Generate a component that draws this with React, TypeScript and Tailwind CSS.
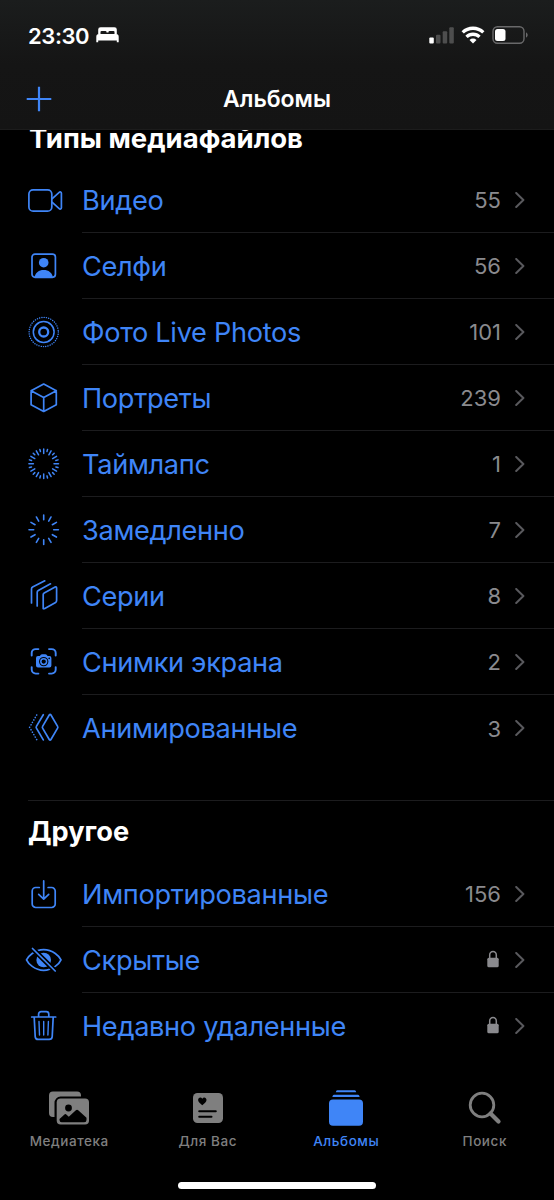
import type { ReactNode } from "react";

type IconProps = {
  children: ReactNode;
};

// All row icons share a 40px box and a thin outline
function RowIcon({ children }: IconProps) {
  return (
    <svg
      viewBox="0 0 40 40"
      className="h-10 w-10 shrink-0"
      fill="none"
      stroke="currentColor"
      strokeWidth="1.7"
      strokeLinecap="round"
      strokeLinejoin="round"
    >
      {children}
    </svg>
  );
}

function ticks(count: number, inner: number, outer: number, offset = 0) {
  return Array.from({ length: count }, (_, i) => {
    const a = ((i + offset) * 2 * Math.PI) / count;
    const x = Math.sin(a);
    const y = Math.cos(a);
    return `M${19.7 + x * inner} ${19.7 - y * inner}L${19.7 + x * outer} ${19.7 - y * outer}`;
  }).join("");
}

const icons = {
  video: (
    <RowIcon>
      <rect x="4.9" y="9.9" width="22.9" height="21.2" rx="4.2" />
      <path d="M28.3 18.6l6.9-6.2c.9-.8 2.2-.4 2.2.9v14.4c0 1.3-1.3 1.7-2.2.9l-6.9-6.2" />
    </RowIcon>
  ),
  selfie: (
    <RowIcon>
      <rect x="8" y="8.1" width="23.4" height="23.2" rx="3" />
      <circle cx="19.7" cy="16.7" r="4.8" fill="currentColor" stroke="none" />
      <path d="M10.5 31.3c.7-4.6 4.4-7.3 9.2-7.3s8.5 2.7 9.2 7.300z" fill="currentColor" stroke="none" />
    </RowIcon>
  ),
  live: (
    <RowIcon>
      <circle cx="19.7" cy="20" r="4.5" strokeWidth="2.3" />
      <circle cx="19.7" cy="20" r="10.4" strokeWidth="1.5" />
      <circle cx="19.7" cy="20" r="14.6" strokeWidth="1.4" strokeDasharray="0.1 2.193" />
    </RowIcon>
  ),
  cube: (
    <RowIcon>
      <path d="M19.7 6L32.3 12.700v14L19.7 33.400L7.100 26.700V12.700zM7.100 12.700l12.600 6.900l12.600-6.900M19.700 19.600v13.800" />
    </RowIcon>
  ),
  timelapse: (
    <RowIcon>
      <path d={ticks(12, 10.3, 14.8)} strokeWidth="1.5" />
      <path d={ticks(12, 12.6, 14.8, 0.5)} strokeWidth="1.5" />
    </RowIcon>
  ),
  slomo: (
    <RowIcon>
      <path d={ticks(12, 10, 14.7)} strokeWidth="1.6" />
    </RowIcon>
  ),
  burst: (
    <RowIcon>
      <path d="M19.2 32.700V18.600c0-.8.3-1.300 1-1.700l10.900-5.900c.9-.5 1.500 0 1.500.9v12.700c0 .9-.3 1.400-1 1.800l-10.800 6c-.9.5-1.600.4-1.600.3z" />
      <path d="M13.200 30V16.200c0-.9.4-1.400 1.100-1.800l12.200-6.600M7.500 27V12.900c0-.9.4-1.400 1.100-1.800l12.200-6.300" />
    </RowIcon>
  ),
  screenshot: (
    <RowIcon>
      <g transform="translate(0 -0.4)">
        <path
          d="M7.700 14v-2.500a4 4 0 0 1 4-4h2.700M25 7.500h2.700a4 4 0 0 1 4 4V14M31.700 25.500V28a4 4 0 0 1-4 4H25M14.400 32h-2.700a4 4 0 0 1-4-4v-2.500"
          strokeWidth="1.9"
        />
        <path
          fillRule="evenodd"
          stroke="none"
          fill="currentColor"
          d="M14 14.500h1.800l1-1.300c.3-.4.7-.6 1.200-.6h3.400c.5 0 .9.200 1.200.6l1 1.300h1.800a2 2 0 0 1 2 2v7.400a2 2 0 0 1-2 2H14a2 2 0 0 1-2-2v-7.400a2 2 0 0 1 2-2zM19.700 15.300a4.700 4.700 0 1 0 0 9.400a4.700 4.700 0 0 0 0-9.400zM25.200 16a.8.8 0 1 0 0 1.600a.8.8 0 0 0 0-1.600z"
        />
        <circle cx="19.7" cy="20" r="2.900" strokeWidth="1.500" />
      </g>
    </RowIcon>
  ),
  animated: (
    <RowIcon>
      <g transform="translate(0 -0.4)">
        <path d="M25.400 7.200c.4-.6 1-.6 1.400 0l6.800 11.600c.4.6.4 1.100 0 1.700l-6.800 11.700c-.4.6-1 .6-1.400 0l-6.800-11.700c-.4-.6-.4-1.100 0-1.700z" />
        <path d="M19.300 7.100l-6.900 11.700c-.4.6-.4 1.100 0 1.700l6.900 11.800" />
        <path d="M12.700 7.400L5.600 19.700L12.700 32" strokeWidth="1.600" strokeDasharray="0.100 2.730" />
      </g>
    </RowIcon>
  ),
  imported: (
    <RowIcon>
      <path d="M15.300 13.500h-3.600a3.500 3.500 0 0 0-3.500 3.500v13a3.500 3.500 0 0 0 3.500 3.500h16a3.500 3.500 0 0 0 3.500-3.500V17a3.500 3.500 0 0 0-3.500-3.500h-3.600" />
      <path d="M19.700 6.900v18M14.700 20.300l5 4.800l5-4.800" />
    </RowIcon>
  ),
  hidden: (
    <RowIcon>
      <path d="M2.500 19.900C4 16.500 10.500 9.700 19.700 9.700s15.900 6.800 17.300 10.200c-1.400 3.400-8.100 10.500-17.300 10.500S4 23.300 2.500 19.900z" />
      <circle cx="19.700" cy="20" r="7.300" fill="currentColor" stroke="none" />
      <path d="M8.200 8.200l23.300 23" stroke="black" strokeWidth="5" strokeLinecap="butt" />
      <path d="M8.500 8.500l22.700 22.500" />
    </RowIcon>
  ),
  trash: (
    <RowIcon>
      <path d="M7.700 11h24M14.600 10.600V8.200a2.500 2.500 0 0 1 2.500-2.500h5.200a2.500 2.500 0 0 1 2.500 2.500v2.400M10.200 11.200l1 19.400a3 3 0 0 0 3 2.800h11a3 3 0 0 0 3-2.800l1-19.400" />
      <path d="M15 15.500l.5 13.500M19.700 15.500V29M24.400 15.500L23.900 29" strokeWidth="1.400" />
    </RowIcon>
  ),
};

type Album = {
  icon: ReactNode;
  name: string;
  count?: number;
};

const mediaTypes: Album[] = [
  { icon: icons.video, name: "Видео", count: 55 },
  { icon: icons.selfie, name: "Селфи", count: 56 },
  { icon: icons.live, name: "Фото Live Photos", count: 101 },
  { icon: icons.cube, name: "Портреты", count: 239 },
  { icon: icons.timelapse, name: "Таймлапс", count: 1 },
  { icon: icons.slomo, name: "Замедленно", count: 7 },
  { icon: icons.burst, name: "Серии", count: 8 },
  { icon: icons.screenshot, name: "Снимки экрана", count: 2 },
  { icon: icons.animated, name: "Анимированные", count: 3 },
];

const other: Album[] = [
  { icon: icons.imported, name: "Импортированные", count: 156 },
  { icon: icons.hidden, name: "Скрытые" },
  { icon: icons.trash, name: "Недавно удаленные" },
];

function Lock() {
  return (
    <svg viewBox="0 0 12 18" className="mr-0.5 -mt-1 h-[18px] w-3" fill="none">
      <path d="M2.700 9V4.900a3.300 3.500 0 0 1 6.600 0V9" stroke="currentColor" strokeWidth="1.500" />
      <rect x="0.300" y="7.700" width="11.400" height="9.600" rx="1.500" fill="currentColor" />
    </svg>
  );
}

function AlbumRow({ album, last }: { album: Album; last: boolean }) {
  return (
    <div className="flex h-[66px] items-center pl-6 text-[#3f85f7]">
      {album.icon}
      <div
        className={`ml-[18px] flex h-full flex-1 items-center pr-[29px] ${last ? "" : "border-b border-[#1c1c1e]"}`}
      >
        <span className="flex-1 pt-[3px] text-[27.2px] tracking-[-0.33px]">{album.name}</span>
        <span className="pt-0.5 text-[22px] text-[#8a8a8e]">{album.count ?? <Lock />}</span>
        <svg viewBox="0 0 10 16" className="ml-3.5 h-4 w-2.5 text-[#59595d]" fill="none">
          <path
            d="M1.200 1l7.200 7l-7.200 7"
            stroke="currentColor"
            strokeWidth="2"
            strokeLinecap="round"
            strokeLinejoin="round"
          />
        </svg>
      </div>
    </div>
  );
}

function AlbumList({ albums }: { albums: Album[] }) {
  return (
    <div>
      {albums.map((album, i) => (
        <AlbumRow key={album.name} album={album} last={i === albums.length - 1} />
      ))}
    </div>
  );
}

function StatusBar() {
  return (
    <div className="flex h-[70px] items-center pl-7 pr-[26px]">
      <span className="pt-0.5 text-[22px] font-semibold tracking-[-0.4px]">23:30</span>
      <svg viewBox="0 0 23 16" className="ml-[7px] h-4 w-[23px]" fill="currentColor">
        <path
          fillRule="evenodd"
          d="M2.200 7.200V2.600A2.400 2.400 0 0 1 4.600.2h13.800a2.400 2.400 0 0 1 2.400 2.400v4.600h-2.300V5a1 1 0 0 0-1-1h-4a1 1 0 0 0-1 1v.6h-2V5a1 1 0 0 0-1-1h-4a1 1 0 0 0-1 1v2.200z"
        />
        <path d="M3 7h17a2.700 2.700 0 0 1 2.700 2.700v5.600h-1.900v-1.700H2.200v1.700H.3V9.700A2.700 2.700 0 0 1 3 7z" />
      </svg>
      <div className="ml-auto flex items-center">
        <svg viewBox="0 0 26 17" className="h-[17px] w-[26px]" fill="currentColor">
          <rect x="0.300" y="10.500" width="4.500" height="6" rx="1" />
          <g opacity="0.230">
            <rect x="7" y="7.800" width="4.500" height="8.700" rx="1" />
            <rect x="13.700" y="4.300" width="4.500" height="12.200" rx="1" />
            <rect x="20.300" y="0.300" width="4.500" height="16.200" rx="1" />
          </g>
        </svg>
        <svg viewBox="0 0 24 18" className="ml-1.5 h-[18px] w-6" fill="none" stroke="currentColor" strokeWidth="3.300">
          <path d="M1.700 6.400a14.800 14.800 0 0 1 20.600 0M5.500 10.900a9.300 9.300 0 0 1 13 0" />
          <path d="M12 17.500L8.500 14a5 5 0 0 1 7 0z" fill="currentColor" stroke="none" />
        </svg>
        <svg viewBox="0 0 36 18" className="ml-[7px] h-[18px] w-9" fill="none">
          <rect x="1" y="0.800" width="31" height="16.400" rx="4.500" stroke="#69696a" strokeWidth="1.400" />
          <rect x="3" y="3" width="10.500" height="12" rx="2.500" fill="white" />
          <path d="M34 6.500c1 .3 1.700 1.300 1.700 2.500s-.7 2.200-1.700 2.500z" fill="#69696a" />
        </svg>
      </div>
    </div>
  );
}

function Header() {
  return (
    <header className="relative z-10 h-[130px] shrink-0 border-b border-[#1c1c1c] bg-linear-to-b from-[#1b1d1d] via-[#151515] to-[#141414]">
      <StatusBar />
      <div className="grid grid-cols-3 items-center px-[26px] pt-3">
        <svg viewBox="0 0 26 26" className="h-[26px] w-[26px] text-[#3f85f7]" stroke="currentColor" strokeWidth="2.200">
          <path d="M13 0.700v24.600M0.700 13h24.600" />
        </svg>
        <h1 className="pt-px text-center text-[23px] leading-8 font-semibold">Альбомы</h1>
      </div>
    </header>
  );
}

const tabs = [
  {
    label: "Медиатека",
    icon: (
      <>
        <path d="M5 0.500h24a4 4 0 0 1 4 4v1H12.500A6.500 6.500 0 0 0 6.500 12v14H5a4 4 0 0 1-4-4V4.500a4 4 0 0 1 4-4z" />
        <rect x="8.700" y="7.500" width="32.300" height="26" rx="4" />
        <circle cx="20.500" cy="17" r="3.400" fill="black" />
        <path
          d="M11.500 28l4.700-4.300c.8-.8 1.600-.8 2.400 0l2.200 2l6.800-6.200c1-.9 1.900-.9 2.900 0l8 7.300v2.100a2.300 2.300 0 0 1-2.300 2.300H13.700a2.300 2.300 0 0 1-2.200-2.300z"
          fill="black"
        />
      </>
    ),
  },
  {
    label: "Для Вас",
    icon: (
      <>
        <rect x="6" y="2" width="30" height="30" rx="4.500" />
        <path
          d="M15.300 14.300c-2.500-1.900-4.200-3.300-4.200-5.200c0-2.700 3-3.400 4.200-1.300c1.200-2.100 4.200-1.400 4.200 1.300c0 1.900-1.700 3.300-4.200 5.200z"
          fill="black"
        />
        <path d="M12.200 20.300h16.600M12.200 25.700h12.300" stroke="black" strokeWidth="2" strokeLinecap="round" />
      </>
    ),
  },
  {
    label: "Альбомы",
    active: true,
    icon: (
      <>
        <path d="M12.300-.8h17.400q1.200 0 1.500 2H10.800q.3-2 1.500-2zM9 3.700h24q1.200 0 1.700 2.200H7.300Q7.800 3.700 9 3.700z" />
        <rect x="4" y="8.500" width="34" height="26.200" rx="4" />
      </>
    ),
  },
  {
    label: "Поиск",
    icon: (
      <>
        <circle cx="18" cy="14" r="11.800" fill="none" stroke="currentColor" strokeWidth="2.800" />
        <path d="M26.500 22.500l8 8" stroke="currentColor" strokeWidth="4.200" strokeLinecap="round" />
      </>
    ),
  },
];

function TabBar() {
  return (
    <nav className="grid grid-cols-4">
      {tabs.map((tab) => (
        <div
          key={tab.label}
          className={`flex flex-col items-center ${tab.active ? "text-[#3f85f7]" : "text-[#7f7f7f]"}`}
        >
          <svg viewBox="0 0 42 34" className="h-[34px] w-[42px] overflow-visible" fill="currentColor">
            {tab.icon}
          </svg>
          <span className="mt-1.5 text-[13.5px] leading-5 font-medium tracking-[0.55px]">{tab.label}</span>
        </div>
      ))}
    </nav>
  );
}

export default function App() {
  return (
    <div className="flex h-[1200px] w-[554px] flex-col overflow-hidden bg-black font-['Inter','Noto_Sans',sans-serif] text-white">
      <Header />
      <main className="h-[961px] shrink-0">
        <section>
          <h2 className="-mt-2.5 mb-[11px] pl-[29px] text-[27.5px] leading-9 font-bold">Типы медиафайлов</h2>
          <AlbumList albums={mediaTypes} />
        </section>
        <section className="mt-[39px] ml-7 border-t border-[#1c1c1e]">
          <h2 className="pt-[13px] pb-[11px] text-[27.2px] leading-9 font-bold">Другое</h2>
          <div className="-ml-7">
            <AlbumList albums={other} />
          </div>
        </section>
      </main>
      <TabBar />
      <div className="mx-auto mt-[31px] h-[7px] w-[198px] rounded-full bg-white" />
    </div>
  );
}
